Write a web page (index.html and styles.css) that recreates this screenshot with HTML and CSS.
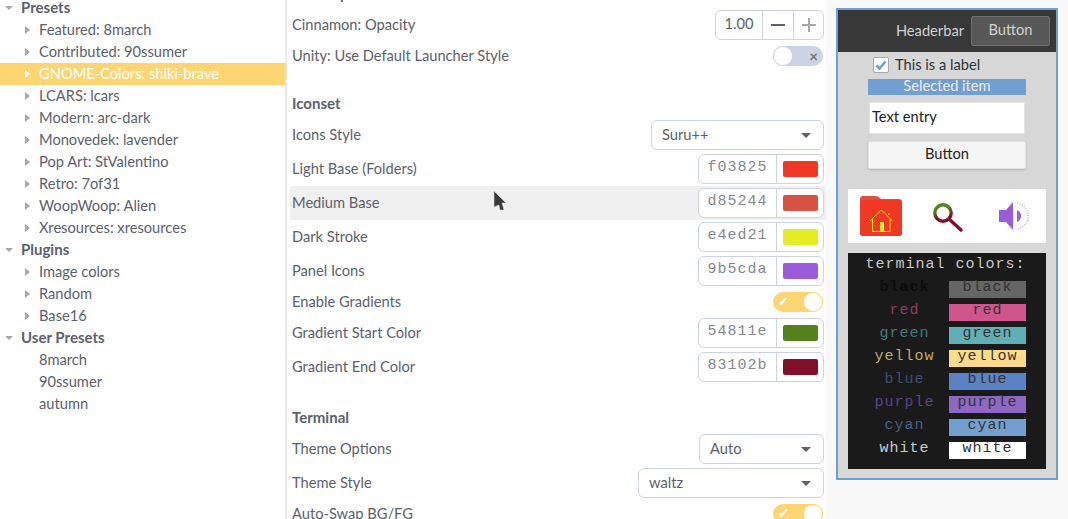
FILE: index.html
```html
<!DOCTYPE html>
<html lang="en">
  <head>
    <meta charset="UTF-8">
    <meta name="viewport" content="width=device-width, initial-scale=1.0">
    <title>Oomox</title>
    <link rel="stylesheet" href="styles.css">
  </head>
  <body>
    <div class="window">

      <div class="sidebar">
        <div class="tree-group"><span class="arrow-down"></span>Presets</div>
        <div class="tree-item"><span class="arrow-right"></span>Featured: 8march</div>
        <div class="tree-item"><span class="arrow-right"></span>Contributed: 90ssumer</div>
        <div class="tree-item selected"><span class="arrow-right"></span>GNOME-Colors: shiki-brave</div>
        <div class="tree-item"><span class="arrow-right"></span>LCARS: lcars</div>
        <div class="tree-item"><span class="arrow-right"></span>Modern: arc-dark</div>
        <div class="tree-item"><span class="arrow-right"></span>Monovedek: lavender</div>
        <div class="tree-item"><span class="arrow-right"></span>Pop Art: StValentino</div>
        <div class="tree-item"><span class="arrow-right"></span>Retro: 7of31</div>
        <div class="tree-item"><span class="arrow-right"></span>WoopWoop: Alien</div>
        <div class="tree-item"><span class="arrow-right"></span>Xresources: xresources</div>
        <div class="tree-group"><span class="arrow-down"></span>Plugins</div>
        <div class="tree-item"><span class="arrow-right"></span>Image colors</div>
        <div class="tree-item"><span class="arrow-right"></span>Random</div>
        <div class="tree-item"><span class="arrow-right"></span>Base16</div>
        <div class="tree-group"><span class="arrow-down"></span>User Presets</div>
        <div class="tree-item leaf">8march</div>
        <div class="tree-item leaf">90ssumer</div>
        <div class="tree-item leaf">autumn</div>
      </div>

      <div class="options">
        <div class="options-scroll">
          <h3 class="section first">Desktop</h3>
          <div class="row">
            <span class="label">Cinnamon: Opacity</span>
            <div class="spin">
              <span class="spin-value">1.00</span>
              <span class="spin-btn minus"></span>
              <span class="spin-btn plus"></span>
            </div>
          </div>
          <div class="row switch-row">
            <span class="label">Unity: Use Default Launcher Style</span>
            <span class="switch off"><span class="knob"></span><span class="mark">&#215;</span></span>
          </div>

          <h3 class="section">Iconset</h3>
          <div class="row">
            <span class="label">Icons Style</span>
            <div class="select w-173">Suru++<span class="caret"></span></div>
          </div>
          <div class="row">
            <span class="label">Light Base (Folders)</span>
            <div class="color"><span class="hex">f03825</span><span class="well"><span class="swatch c-f03825"></span></span></div>
          </div>
          <div class="row hover">
            <span class="label">Medium Base</span>
            <div class="color"><span class="hex">d85244</span><span class="well"><span class="swatch c-d85244"></span></span></div>
          </div>
          <div class="row">
            <span class="label">Dark Stroke</span>
            <div class="color"><span class="hex">e4ed21</span><span class="well"><span class="swatch c-e4ed21"></span></span></div>
          </div>
          <div class="row">
            <span class="label">Panel Icons</span>
            <div class="color"><span class="hex">9b5cda</span><span class="well"><span class="swatch c-9b5cda"></span></span></div>
          </div>
          <div class="row switch-row">
            <span class="label">Enable Gradients</span>
            <span class="switch on"><span class="mark">&#10004;</span><span class="knob"></span></span>
          </div>
          <div class="row">
            <span class="label">Gradient Start Color</span>
            <div class="color"><span class="hex">54811e</span><span class="well"><span class="swatch c-54811e"></span></span></div>
          </div>
          <div class="row">
            <span class="label">Gradient End Color</span>
            <div class="color"><span class="hex">83102b</span><span class="well"><span class="swatch c-83102b"></span></span></div>
          </div>

          <h3 class="section">Terminal</h3>
          <div class="row">
            <span class="label">Theme Options</span>
            <div class="select w-125">Auto<span class="caret"></span></div>
          </div>
          <div class="row">
            <span class="label">Theme Style</span>
            <div class="select w-186">waltz<span class="caret"></span></div>
          </div>
          <div class="row switch-row">
            <span class="label">Auto-Swap BG/FG</span>
            <span class="switch on"><span class="mark">&#10004;</span><span class="knob"></span></span>
          </div>
        </div>
      </div>

      <div class="preview-pane">
        <div class="preview">
          <div class="headerbar">
            <span class="label">Headerbar</span>
            <span class="headerbar-btn">Button</span>
          </div>
          <div class="check-row">
            <span class="checkbox">
              <svg width="12" height="12" viewBox="0 0 12 12"><path d="M1.5 6.5 L4.5 9.5 L10.5 2.5" fill="none" stroke="#6d9dd2" stroke-width="2.6"/></svg>
            </span>
            This is a label
          </div>
          <div class="selected-item">Selected item</div>
          <div class="text-entry">Text entry</div>
          <div class="preview-btn">Button</div>

          <div class="icons">
            <svg width="44" height="44" viewBox="0 0 44 44">
              <path d="M1 5 Q1 2 4 2 H16 Q19 2 21 4 L22 5 H40 Q43 5 43 8 V39 Q43 42 40 42 H4 Q1 42 1 39 Z" fill="#d85244"/>
              <path d="M1 9 Q1 6 4 6 H40 Q43 6 43 9 V39 Q43 42 40 42 H4 Q1 42 1 39 Z" fill="#f03825"/>
              <path d="M11 27 L22.3 16 L33.5 27 M13.5 25 V37.5 H31 V25 M30 19 V21" fill="none" stroke="#e4ed21" stroke-width="1"/>
              <rect x="21" y="28" width="4" height="9.5" fill="#e4ed21"/>
            </svg>
            <svg width="44" height="44" viewBox="0 0 44 44">
              <defs>
                <linearGradient id="lens" x1="0.2" y1="0" x2="0.5" y2="1">
                  <stop offset="0.3" stop-color="#54811e"/>
                  <stop offset="0.8" stop-color="#83102b"/>
                </linearGradient>
              </defs>
              <circle cx="18" cy="19" r="8.2" fill="none" stroke="url(#lens)" stroke-width="3.4"/>
              <path d="M24.5 25.5 L36 36" stroke="#83102b" stroke-width="3.4" stroke-linecap="round"/>
            </svg>
            <svg width="44" height="44" viewBox="0 0 44 44">
              <path d="M8 16 H15 L22 8 V36 L15 28 H8 Z" fill="#9b5cda"/>
              <path d="M26 16 Q30 18 30 22 Q30 26 26 28 Z" fill="#9b5cda"/>
              <path d="M26 9 Q37 12 37 22 Q37 32 26 35" fill="none" stroke="#9b5cda" stroke-width="1.4" stroke-dasharray="1 1.5" opacity="0.55"/>
            </svg>
          </div>

          <div class="terminal">
            <div class="terminal-title">terminal colors:</div>
            <div class="terminal-grid">
              <span class="fg-black">black</span><span class="cell bg-black">black</span>
              <span class="fg-red">red</span><span class="cell bg-red">red</span>
              <span class="fg-green">green</span><span class="cell bg-green">green</span>
              <span class="fg-yellow">yellow</span><span class="cell bg-yellow">yellow</span>
              <span class="fg-blue">blue</span><span class="cell bg-blue">blue</span>
              <span class="fg-purple">purple</span><span class="cell bg-purple">purple</span>
              <span class="fg-cyan">cyan</span><span class="cell bg-cyan">cyan</span>
              <span class="fg-white">white</span><span class="cell bg-white">white</span>
            </div>
          </div>
        </div>
      </div>

    </div>

    <svg class="cursor" width="16" height="24" viewBox="0 0 16 24">
      <path d="M1 1 L13 13 L9 13 L11 20 L7 20 L6 15 L1 17 Z" fill="#3a3a3a" stroke="#dcdcdc" stroke-width="0.5"/>
    </svg>
  </body>
</html>
```

FILE: styles.css
```css
body {
	margin: 0;
	padding: 0;
	font-family: "Lato", sans-serif;
	font-size: 14.67px;
	color: #5c616c;
	background: #ffffff;
	overflow: hidden;
}
.window {
	display: flex;
	width: 1068px;
	height: 519px;
	overflow: hidden;
}
.label {
	padding-bottom: 2px;
}

/* left tree */
.sidebar {
	width: 285px;
	flex: none;
	margin-top: -3px;
	border-right: 2px solid #e8e8e8;
}
.tree-group, .tree-item {
	display: flex;
	align-items: center;
	box-sizing: border-box;
	height: 22px;
	padding-bottom: 2px;
}
.tree-group {
	padding-left: 5px;
	font-size: 15px;
	font-weight: bold;
}
.tree-item {
	padding-left: 25px;
}
.tree-item.leaf {
	padding-left: 39px;
}
.tree-item.selected {
	background: #fdd673;
	color: #ffffff;
}
.arrow-down {
	width: 0;
	height: 0;
	margin: 2px 8px 0 0;
	border-left: 4px solid transparent;
	border-right: 4px solid transparent;
	border-top: 4px solid #a5a7ac;
}
.arrow-right {
	width: 0;
	height: 0;
	margin: 2px 9px 0 0;
	border-top: 4.5px solid transparent;
	border-bottom: 4.5px solid transparent;
	border-left: 5px solid #a5a7ac;
}
.selected .arrow-right {
	border-left-color: #ffffff;
}

/* middle options */
.options {
	width: 539px;
	flex: none;
	overflow: hidden;
}
.options-scroll {
	margin-top: -20px;
}
.section {
	margin: 20px 0 0 0;
	padding-left: 5px;
	height: 28px;
	line-height: 26px;
	font-size: 15px;
	font-weight: bold;
}
.section.first {
	margin-top: 0;
}
.row {
	display: flex;
	align-items: center;
	justify-content: space-between;
	box-sizing: border-box;
	height: 34px;
	padding: 0 2px 0 5px;
}
.row.switch-row {
	height: 28px;
	padding-right: 3px;
}
.row.hover {
	margin-left: 3px;
	padding-left: 2px;
	background: #f0f0f0;
}

.spin {
	display: flex;
	box-sizing: border-box;
	width: 109px;
	height: 30px;
	border: 1px solid #cdd3e3;
	border-radius: 6px;
	background: #ffffff;
}
.spin-value {
	width: 46px;
	text-align: center;
	line-height: 26px;
}
.spin-btn {
	position: relative;
	flex: 1;
	border-left: 1px solid #cdd3e3;
}
.spin-btn::before, .plus::after {
	content: "";
	position: absolute;
	left: 8px;
	top: 13px;
	width: 14px;
	height: 2px;
	background: #5c616c;
}
.plus::before {
	background: #a5a7ac;
}
.plus::after {
	left: 14px;
	top: 7px;
	width: 2px;
	height: 14px;
	background: #a5a7ac;
}

.switch {
	display: flex;
	align-items: center;
	justify-content: space-between;
	box-sizing: border-box;
	width: 50px;
	height: 20px;
	border-radius: 10px;
}
.switch.off {
	background: #cdd3e3;
}
.switch.on {
	background: #fdd673;
}
.knob {
	box-sizing: border-box;
	width: 20px;
	height: 20px;
	border-radius: 50%;
	background: #ffffff;
	border: 1px solid #cdd3e3;
}
.on .knob {
	border-color: #fdd673;
}
.mark {
	font-weight: bold;
	line-height: 20px;
}
.off .mark {
	margin-right: 5px;
	font-size: 15px;
	color: #6f7480;
}
.on .mark {
	margin-left: 5px;
	font-size: 13px;
	font-weight: normal;
	color: #ffffff;
	font-family: "DejaVu Sans", sans-serif;
}

.select {
	display: flex;
	align-items: center;
	justify-content: space-between;
	box-sizing: border-box;
	height: 30px;
	padding: 0 12px 2px 10px;
	border: 1px solid #cdd3e3;
	border-radius: 6px;
	background: #ffffff;
}
.w-173 {
	width: 173px;
}
.w-125 {
	width: 125px;
}
.w-186 {
	width: 186px;
}
.caret {
	width: 0;
	height: 0;
	margin-top: 2px;
	border-left: 5px solid transparent;
	border-right: 5px solid transparent;
	border-top: 5px solid #5c616c;
}

.color {
	display: flex;
	box-sizing: border-box;
	width: 126px;
	height: 30px;
	border: 1px solid #cdd3e3;
	border-radius: 6px;
	background: #ffffff;
}
.hex {
	width: 77px;
	text-align: center;
	font-family: "Liberation Mono", monospace;
	font-size: 15px;
	letter-spacing: 1px;
	line-height: 26px;
	color: #85888f;
}
.well {
	display: flex;
	align-items: center;
	justify-content: center;
	flex: 1;
	border-left: 1px solid #cdd3e3;
}
.swatch {
	width: 35px;
	height: 16px;
	border-radius: 2px;
}
.c-f03825 { background: #f03825; }
.c-d85244 { background: #d85244; }
.c-e4ed21 { background: #e4ed21; }
.c-9b5cda { background: #9b5cda; }
.c-54811e { background: #54811e; }
.c-83102b { background: #83102b; }

/* right preview */
.preview-pane {
	flex: 1;
	padding: 8px 10px 0 10px;
	background: #f9f9f9;
}
.preview {
	box-sizing: border-box;
	height: 472px;
	border: 2px solid #6f9fd4;
	background: #d7d7d7;
	color: #2e3436;
}
.headerbar {
	display: flex;
	align-items: center;
	justify-content: flex-end;
	gap: 7px;
	height: 42px;
	padding-right: 6px;
	background: #383838;
	color: #d0d0d0;
}
.headerbar-btn {
	box-sizing: border-box;
	width: 79px;
	height: 30px;
	line-height: 26px;
	text-align: center;
	background: #585858;
	border: 1px solid #6e6e6e;
	border-radius: 2px;
}
.check-row {
	display: flex;
	align-items: center;
	gap: 6px;
	box-sizing: border-box;
	height: 18px;
	margin-top: 5px;
	padding: 0 0 4px 35px;
}
.checkbox {
	display: flex;
	align-items: center;
	justify-content: center;
	box-sizing: border-box;
	width: 16px;
	height: 16px;
	margin-top: 2px;
	background: #ffffff;
	border: 1px solid #a8a8a8;
	border-radius: 2px;
}
.selected-item {
	width: 158px;
	height: 16px;
	margin: 4px auto 0 auto;
	background: #729fd1;
	color: #eeeeee;
	line-height: 14px;
	text-align: center;
}
.text-entry {
	box-sizing: border-box;
	width: 156px;
	height: 32px;
	margin: 7px auto 0 auto;
	padding-left: 2px;
	background: #ffffff;
	border: 1px solid #e4e4e4;
	line-height: 27px;
	color: #222222;
}
.preview-btn {
	box-sizing: border-box;
	width: 158px;
	height: 28px;
	margin: 7px auto 0 auto;
	background: #f5f5f5;
	border: 1px solid #e2e2e2;
	border-radius: 2px;
	box-shadow: 0 1px 2px #b0b0b0;
	line-height: 23px;
	text-align: center;
	color: #222222;
}
.icons {
	display: grid;
	grid-template-columns: repeat(3, 66px);
	justify-items: center;
	align-items: center;
	width: 198px;
	height: 54px;
	margin: 20px auto 0 auto;
	background: #ffffff;
}
.terminal {
	width: 198px;
	height: 216px;
	margin: 10px auto 0 auto;
	background: #1a1a1a;
	font-family: "Liberation Mono", monospace;
	font-size: 15px;
	letter-spacing: 1px;
}
.terminal-title {
	height: 28px;
	line-height: 23px;
	padding-right: 3px;
	text-align: center;
	color: #c8c8c8;
}
.terminal-grid {
	display: grid;
	grid-template-columns: 89px 77px;
	grid-auto-rows: 17px;
	row-gap: 6px;
	padding-left: 12px;
	line-height: 13px;
	text-align: center;
}
.fg-black { color: #0c0c0c; font-weight: bold; }
.fg-red { color: #8f3b60; }
.fg-green { color: #427a80; }
.fg-yellow { color: #c4a968; }
.fg-blue { color: #3e4e78; }
.fg-purple { color: #5c4389; }
.fg-cyan { color: #406285; }
.fg-white { color: #cccccc; }
.cell { color: #333333; }
.bg-black { background: #666666; }
.bg-red { background: #d1558d; }
.bg-green { background: #62aeb6; }
.bg-yellow { background: #fddb8a; }
.bg-blue { background: #5a82c4; }
.bg-purple { background: #8e68c2; }
.bg-cyan { background: #729fd0; }
.bg-white { background: #ffffff; }

.cursor {
	position: absolute;
	left: 493px;
	top: 190px;
}
```
